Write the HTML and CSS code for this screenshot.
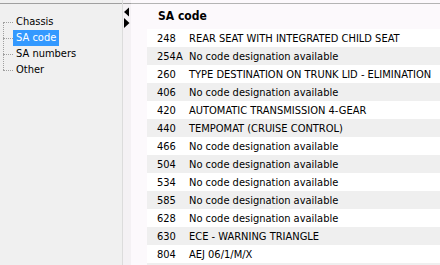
FILE: index.html
```html
<!DOCTYPE html>
<html>
<head>
<meta charset="utf-8">
<link rel="stylesheet" href="styles.css">
</head>
<body>
<div class="app">
  <aside class="tree">
    <div class="tree-inner">
      <ul class="nodes">
        <li class="node"><span class="label">Chassis</span></li>
        <li class="node"><span class="label selected">SA code</span></li>
        <li class="node"><span class="label">SA numbers</span></li>
        <li class="node last"><span class="label">Other</span></li>
      </ul>
    </div>
  </aside>
  <div class="splitter">
    <div class="splitter-inner">
      <svg class="arrows" width="8" height="26" viewBox="0 0 8 26">
        <polygon points="1,8 6,3.5 6,12.5" fill="#000"/>
        <polygon points="1,14 1,24 6.5,19" fill="#000"/>
      </svg>
    </div>
  </div>
  <main class="list">
    <div class="list-inner">
      <div class="header">SA code</div>
      <div class="rows">
        <div class="row"><span class="code">248</span><span class="desc">REAR SEAT WITH INTEGRATED CHILD SEAT</span></div>
        <div class="row"><span class="code">254A</span><span class="desc">No code designation available</span></div>
        <div class="row"><span class="code">260</span><span class="desc">TYPE DESTINATION ON TRUNK LID - ELIMINATION</span></div>
        <div class="row"><span class="code">406</span><span class="desc">No code designation available</span></div>
        <div class="row"><span class="code">420</span><span class="desc">AUTOMATIC TRANSMISSION 4-GEAR</span></div>
        <div class="row"><span class="code">440</span><span class="desc">TEMPOMAT (CRUISE CONTROL)</span></div>
        <div class="row"><span class="code">466</span><span class="desc">No code designation available</span></div>
        <div class="row"><span class="code">504</span><span class="desc">No code designation available</span></div>
        <div class="row"><span class="code">534</span><span class="desc">No code designation available</span></div>
        <div class="row"><span class="code">585</span><span class="desc">No code designation available</span></div>
        <div class="row"><span class="code">628</span><span class="desc">No code designation available</span></div>
        <div class="row"><span class="code">630</span><span class="desc">ECE - WARNING TRIANGLE</span></div>
        <div class="row"><span class="code">804</span><span class="desc">AEJ 06/1/M/X</span></div>
        <div class="row"><span class="code"></span><span class="desc"></span></div>
      </div>
    </div>
  </main>
</div>
</body>
</html>
```
FILE: styles.css
```css
html, body {
  margin: 0;
  padding: 0;
}
body {
  width: 440px;
  height: 265px;
  overflow: hidden;
  background: #f0f0f0;
  font-family: "DejaVu Sans Condensed", "DejaVu Sans", sans-serif;
  font-stretch: condensed;
  font-size: 11px;
  color: #000;
}
.app {
  display: flex;
  height: 265px;
  overflow: hidden;
}
.tree {
  width: 122px;
  flex: none;
  background: #f0f0f0;
  padding-top: 3px;
  border-right: 1px solid #dcdcdc;
}
.tree-inner {
  border-top: 1px solid #a0a0a0;
  height: 100%;
  padding-top: 10px;
  box-sizing: border-box;
}
.nodes {
  list-style: none;
  margin: 0;
  padding: 0 0 0 3px;
}
.node {
  height: 16px;
  display: flex;
  align-items: center;
  position: relative;
  padding-left: 10px;
}
.node::before {
  content: "";
  position: absolute;
  left: 0;
  top: 8px;
  width: 10px;
  border-top: 1px dotted #a0a0a0;
}
.node::after {
  content: "";
  position: absolute;
  left: 0;
  top: 8px;
  height: 16px;
  border-left: 1px dotted #a0a0a0;
}
.node.last::after {
  display: none;
}
.label {
  padding: 0 3px;
  line-height: 16px;
  white-space: nowrap;
}
.label.selected {
  background: #3399ff;
  color: #fff;
}
.splitter {
  width: 8px;
  flex: none;
  background: #f4f1f4;
  padding-top: 3px;
}
.splitter-inner {
  border-top: 1px solid #a0a0a0;
  height: 100%;
  box-sizing: border-box;
}
.arrows {
  display: block;
}
.list {
  flex: 1;
  background: #fcf9fc;
  padding-top: 3px;
  min-width: 0;
  overflow: hidden;
}
.list-inner {
  border-top: 1px solid #b4b4b4;
  height: 100%;
  box-sizing: border-box;
  padding-left: 16px;
}
.header {
  height: 25px;
  line-height: 25px;
  padding-left: 11px;
  font-weight: bold;
  font-size: 12px;
}
.rows {
  display: flex;
  flex-direction: column;
}
.row {
  display: flex;
  height: 18px;
  flex: none;
  align-items: center;
  background: #fff;
  white-space: nowrap;
}
.row:nth-child(even) {
  background: #efefef;
}
.code {
  width: 32px;
  padding-left: 10px;
  flex: none;
}
.desc {
  flex: none;
}
```
